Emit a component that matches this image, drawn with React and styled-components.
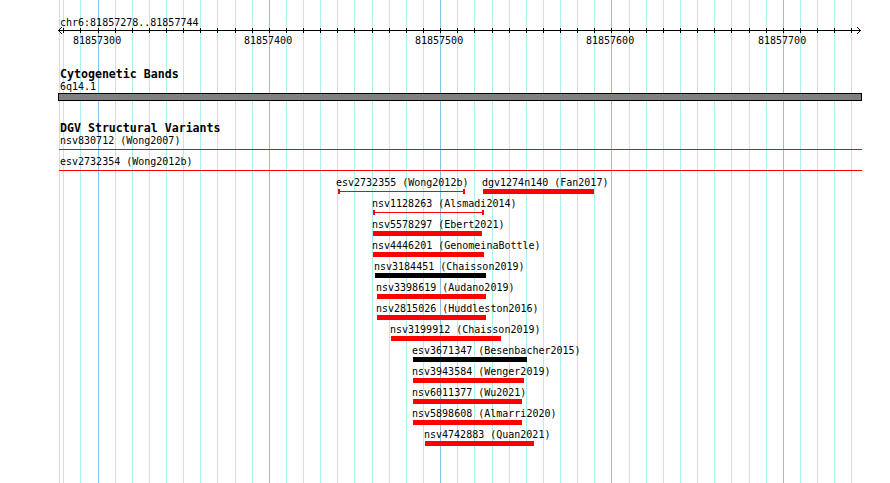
import React from "react";
import styled, { createGlobalStyle } from "styled-components";

const GlobalStyle = createGlobalStyle`
  html, body { margin: 0; padding: 0; background: #ffffff; }
  body { font-family: "DejaVu Sans Mono", "Liberation Mono", monospace; color: #000; }
`;

/* ---------- coordinate system ---------- */
const REF_BP = 81857300;
const REF_X = 98;
const PX_PER_BP = 1.71325;
const bpToX = (bp) => REF_X + (bp - REF_BP) * PX_PER_BP;

const GRID_BPS = [];
for (let bp = 81857280; bp <= 81857740; bp += 10) GRID_BPS.push(bp);
const MAJOR_BPS = [81857300, 81857400, 81857500, 81857600, 81857700];

const spanning = [
  { name: "nsv830712 (Wong2007)" },
  { name: "esv2732354 (Wong2012b)" },
];

const RED = "#ff0000";
const BLACK = "#000000";

const rows = [
  [
    { name: "esv2732355 (Wong2012b)", x: 338, w: 127, kind: "line", color: RED, shift: -2 },
    { name: "dgv1274n140 (Fan2017)", x: 483, w: 111, kind: "bar", color: RED },
  ],
  [{ name: "nsv1128263 (Alsmadi2014)", x: 373, w: 111, kind: "line", color: RED }],
  [{ name: "nsv5578297 (Ebert2021)", x: 373, w: 109, kind: "bar", color: RED }],
  [{ name: "nsv4446201 (GenomeinaBottle)", x: 373, w: 111, kind: "bar", color: RED }],
  [{ name: "nsv3184451 (Chaisson2019)", x: 375, w: 111, kind: "bar", color: BLACK }],
  [{ name: "nsv3398619 (Audano2019)", x: 377, w: 109, kind: "bar", color: RED }],
  [{ name: "nsv2815026 (Huddleston2016)", x: 377, w: 109, kind: "bar", color: RED }],
  [{ name: "nsv3199912 (Chaisson2019)", x: 391, w: 110, kind: "bar", color: RED }],
  [{ name: "esv3671347 (Besenbacher2015)", x: 413, w: 114, kind: "bar", color: BLACK }],
  [{ name: "nsv3943584 (Wenger2019)", x: 413, w: 111, kind: "bar", color: RED }],
  [{ name: "nsv6011377 (Wu2021)", x: 413, w: 109, kind: "bar", color: RED }],
  [{ name: "nsv5898608 (Almarri2020)", x: 413, w: 109, kind: "bar", color: RED }],
  [{ name: "nsv4742883 (Quan2021)", x: 425, w: 109, kind: "bar", color: RED }],
];

/* ---------- styled parts ---------- */
const Panel = styled.div`
  position: relative;
  width: 890px;
  height: 483px;
  overflow: hidden;
  background: #ffffff;
`;

const GridSvg = styled.svg`
  position: absolute;
  left: 0;
  top: 0;
  z-index: 0;
  display: block;
`;

const Tracks = styled.div`
  position: relative;
  z-index: 1;
  display: flex;
  flex-direction: column;
  padding-top: 16px;
`;

const Label = styled.div`
  font-family: "DejaVu Sans Mono", "Liberation Mono", monospace;
  font-size: 10px;
  line-height: 14px;
  height: 12px;
  white-space: nowrap;
  padding-left: 60px;
`;

const TrackTitle = styled.div`
  font-family: "DejaVu Sans Mono", "Liberation Mono", monospace;
  font-weight: bold;
  font-size: 11.6px;
  line-height: 15px;
  height: 13px;
  white-space: nowrap;
  padding-left: 60px;
  margin-top: ${(p) => p.$gap}px;
`;

const RulerSection = styled.section`
  display: flex;
  flex-direction: column;
`;

const RulerSvg = styled.svg`
  display: block;
  overflow: visible;
`;

const TickLabels = styled.div`
  position: relative;
  height: 12px;
`;

const TickLabel = styled.span`
  position: absolute;
  top: 0;
  font-size: 10px;
  line-height: 14px;
  white-space: nowrap;
`;

const Track = styled.section`
  display: flex;
  flex-direction: column;
`;

const Band = styled.div`
  margin-top: 1px;
  margin-left: 58px;
  width: 804px;
  height: 8px;
  box-sizing: border-box;
  border: 1px solid #000;
  background: #808080;
`;

const SpanningFeature = styled.div`
  height: 21px;
  display: flex;
  flex-direction: column;
`;

const SpanLine = styled.div`
  margin-top: 3px;
  margin-left: 59px;
  width: 803px;
  height: 1px;
  background: ${RED};
`;

const FeatureRow = styled.div`
  position: relative;
  height: 21px;
`;

const Feature = styled.div`
  position: absolute;
  top: 0;
  display: flex;
  flex-direction: column;
`;

const FeatureLabel = styled.span`
  font-size: 10px;
  line-height: 14px;
  height: 12px;
  white-space: nowrap;
  margin-left: ${(p) => p.$shift}px;
`;

const BarGlyph = styled.div`
  margin-top: 1px;
  height: 5px;
  background: ${(p) => p.$color};
`;

const LineGlyph = styled.div`
  margin-top: 1px;
  height: 5px;
  box-sizing: border-box;
  border-left: 2px solid ${(p) => p.$color};
  border-right: 2px solid ${(p) => p.$color};
  background: linear-gradient(${(p) => p.$color}, ${(p) => p.$color}) 0 2px / 100% 1px no-repeat;
`;

/* ---------- drawings ---------- */
function Grid() {
  return (
    <GridSvg width="890" height="483" viewBox="0 0 890 483" shapeRendering="crispEdges">
      <rect x="59" y="0" width="1" height="483" fill="#afeeee" />
      {GRID_BPS.map((bp) => (
        <rect
          key={bp}
          x={Math.floor(bpToX(bp))}
          y="0"
          width="1"
          height="483"
          fill={bp % 100 === 0 ? "#87c3e6" : "#afeeee"}
        />
      ))}
    </GridSvg>
  );
}

function Ruler() {
  return (
    <RulerSvg width="890" height="6" viewBox="0 0 890 6">
      <rect x="58" y="2" width="803" height="1" fill="#000" shapeRendering="crispEdges" />
      {GRID_BPS.map((bp) => (
        <rect
          key={bp}
          x={Math.floor(bpToX(bp))}
          y="0"
          width="1"
          height="5"
          fill="#000"
          shapeRendering="crispEdges"
        />
      ))}
      <polyline points="62,-1 58.5,2.5 62,6" fill="none" stroke="#000" strokeWidth="1" />
      <polyline points="857,-1 860.5,2.5 857,6" fill="none" stroke="#000" strokeWidth="1" />
    </RulerSvg>
  );
}

function FeatureItem({ f }) {
  const Glyph = f.kind === "line" ? LineGlyph : BarGlyph;
  return (
    <Feature style={{ left: f.x }}>
      <FeatureLabel $shift={f.shift ?? -1}>{f.name}</FeatureLabel>
      <Glyph $color={f.color} style={{ width: f.w }} />
    </Feature>
  );
}

export default function App() {
  return (
    <>
      <GlobalStyle />
      <Panel>
        <Grid />
        <Tracks>
          <RulerSection>
            <Label>chr6:81857278..81857744</Label>
            <Ruler />
            <TickLabels>
              {MAJOR_BPS.map((bp) => (
                <TickLabel key={bp} style={{ left: Math.floor(bpToX(bp)) - 25 }}>
                  {bp}
                </TickLabel>
              ))}
            </TickLabels>
          </RulerSection>

          <Track>
            <TrackTitle $gap={21}>Cytogenetic Bands</TrackTitle>
            <Label>6q14.1</Label>
            <Band />
          </Track>

          <Track>
            <TrackTitle $gap={20}>DGV Structural Variants</TrackTitle>
            {spanning.map((s) => (
              <SpanningFeature key={s.name}>
                <Label>{s.name}</Label>
                <SpanLine />
              </SpanningFeature>
            ))}
            {rows.map((row, i) => (
              <FeatureRow key={i}>
                {row.map((f) => (
                  <FeatureItem key={f.name} f={f} />
                ))}
              </FeatureRow>
            ))}
          </Track>
        </Tracks>
      </Panel>
    </>
  );
}
